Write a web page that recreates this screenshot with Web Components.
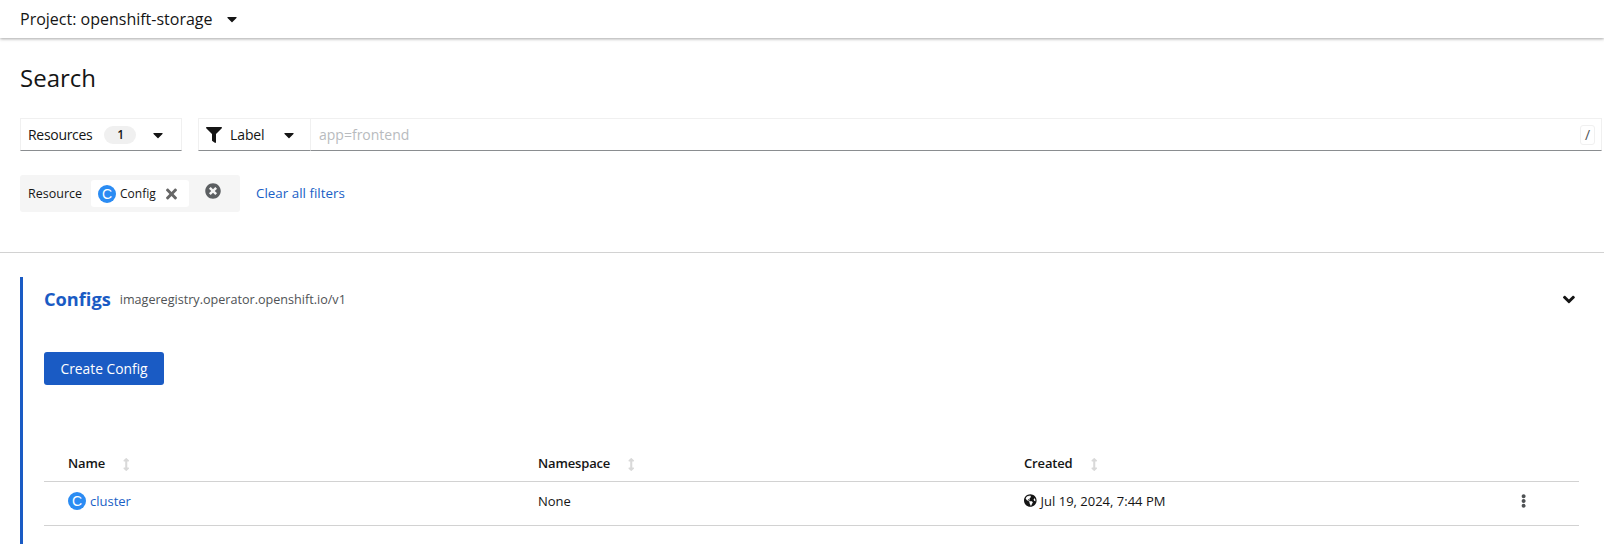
<!DOCTYPE html>
<html>
<head>
<meta charset="utf-8">
<title>Search</title>
<style>
html, body { margin: 0; background: #fff; }
body { font: 14px/21px "Open Sans", sans-serif; color: #151515; }
</style>
</head>
<body>
<project-bar>Project: openshift-storage</project-bar>
<search-page>
    <search-toolbar></search-toolbar>
    <filter-chips></filter-chips>
</search-page>
<resource-section name="Configs" api="imageregistry.operator.openshift.io/v1" action="Create Config">
    <resource-table></resource-table>
</resource-section>

<script>
// fontawesome outlines, [viewBox width, path]
const ICONS = {
    caret: [320, "M31.3 192h257.3c17.8 0 26.7 21.5 14.1 34.1L174.1 354.8c-7.8 7.8-20.5 7.8-28.3 0L17.2 226.1C4.6 213.5 13.5 192 31.3 192z"],
    filter: [512, "M487.976 0H24.028C2.71 0-8.047 25.866 7.058 40.971L192 225.941V432c0 7.831 3.821 15.17 10.237 19.662l80 55.98C298.02 518.69 320 507.493 320 487.98V225.941l184.947-184.97C520.021 25.896 509.338 0 487.976 0z"],
    times: [352, "M242.72 256l100.07-100.07c12.28-12.28 12.28-32.19 0-44.48l-22.24-22.24c-12.28-12.28-32.19-12.28-44.48 0L176 189.28 75.93 89.21c-12.28-12.28-32.19-12.28-44.48 0L9.21 111.45c-12.28 12.28-12.28 32.19 0 44.48L109.28 256 9.21 356.07c-12.28 12.28-12.28 32.19 0 44.48l22.24 22.24c12.28 12.28 32.2 12.28 44.48 0L176 322.72l100.07 100.07c12.28 12.28 32.2 12.28 44.48 0l22.24-22.24c12.28-12.28 12.28-32.19 0-44.48L242.72 256z"],
    timesCircle: [512, "M256 8C119 8 8 119 8 256s111 248 248 248 248-111 248-248S393 8 256 8zm121.6 313.1c4.7 4.7 4.7 12.3 0 17L338 377.6c-4.7 4.7-12.3 4.7-17 0L256 312l-65.1 65.6c-4.7 4.7-12.3 4.7-17 0L134.4 338c-4.7-4.7-4.7-12.3 0-17l65.6-65-65.6-65.1c-4.7-4.7-4.7-12.3 0-17l39.6-39.6c4.7-4.7 12.3-4.7 17 0l65 65.7 65.1-65.6c4.7-4.7 12.3-4.7 17 0l39.6 39.6c4.7 4.7 4.7 12.3 0 17L312 256l65.6 65.1z"],
    globe: [496, "M248 8C111.03 8 0 119.03 0 256s111.03 248 248 248 248-111.03 248-248S384.97 8 248 8zm82.29 357.6c-3.9 3.88-7.99 7.95-11.31 11.28-2.99 3-5.1 6.7-6.17 10.71-1.51 5.66-2.73 11.38-4.77 16.87l-17.39 46.85c-13.76 3-28 4.69-42.65 4.69v-27.38c1.69-12.62-7.64-36.26-22.63-51.25-6-6-9.37-14.14-9.37-22.63v-32.01c0-11.64-6.27-22.34-16.46-27.97-14.37-7.95-34.81-19.06-48.81-26.11-11.48-5.78-22.1-13.14-31.65-21.75l-.8-.72a114.792 114.792 0 0 1-18.06-20.74c-9.38-13.77-24.66-36.42-34.59-51.14 20.47-45.5 57.36-82.04 103.2-101.89l24.01 12.01C203.48 89.74 216 82.01 216 70.11v-11.3c7.99-1.29 16.12-2.11 24.39-2.42l28.3 28.3c6.25 6.25 6.25 16.38 0 22.63L264 112l-10.34 10.34c-3.12 3.12-3.12 8.19 0 11.31l4.69 4.69c3.12 3.12 3.12 8.19 0 11.31l-8 8a8.008 8.008 0 0 1-5.66 2.34h-8.99c-2.08 0-4.08.81-5.58 2.27l-9.92 9.65a8.008 8.008 0 0 0-1.58 9.31l15.59 31.19c2.66 5.32-1.21 11.58-7.15 11.58h-5.64c-1.93 0-3.79-.7-5.24-1.96l-9.28-8.06a16.017 16.017 0 0 0-15.55-3.1l-31.17 10.39a11.95 11.95 0 0 0-8.17 11.34c0 4.53 2.56 8.66 6.61 10.69l11.08 5.54c9.41 4.71 19.79 7.16 30.31 7.16s22.59 27.29 32 32h66.75c8.49 0 16.62 3.37 22.63 9.37l13.69 13.69a30.503 30.503 0 0 1 8.93 21.57 46.536 46.536 0 0 1-13.72 32.98zM417 274.25c-5.79-1.45-10.84-5-14.15-9.97l-17.98-26.97a23.97 23.97 0 0 1 0-26.62l19.59-29.38c2.32-3.47 5.5-6.29 9.24-8.15l12.98-6.49C440.2 193.59 448 223.87 448 256c0 8.67-.74 17.16-1.82 25.54L417 274.25z"],
    kebab: [192, "M96 184c39.8 0 72 32.2 72 72s-32.2 72-72 72-72-32.2-72-72 32.2-72 72-72zM24 80c0 39.8 32.2 72 72 72s72-32.2 72-72S135.8 8 96 8 24 40.2 24 80zm0 352c0 39.8 32.2 72 72 72s72-32.2 72-72-32.2-72-72-72-72 32.2-72 72z"],
    angle: [320, "M143 352.3L7 216.3c-9.4-9.4-9.4-24.6 0-33.9l22.6-22.6c9.4-9.4 24.6-9.4 33.9 0l96.4 96.4 96.4-96.4c9.4-9.4 24.6-9.4 33.9 0l22.6 22.6c9.4 9.4 9.4 24.6 0 33.9l-136 136c-9.2 9.4-24.4 9.4-33.8 0z"],
    sort: [256, "M214.059 377.941H168V134.059h46.059c21.382 0 32.09-25.851 16.971-40.971L144.971 7.029c-9.373-9.373-24.568-9.373-33.941 0L24.971 93.088c-15.119 15.119-4.411 40.971 16.971 40.971H88v243.882H41.941c-21.382 0-32.09 25.851-16.971 40.971l86.059 86.059c9.373 9.373 24.568 9.373 33.941 0l86.059-86.059c15.12-15.119 4.412-40.971-16.97-40.971z"]
}
const icon = (name, h, color) =>
    `<svg viewBox="0 0 ${ICONS[name][0]} 512" height="${h}" width="${h * ICONS[name][0] / 512}" fill="${color}" style="display:block;flex:none"><path d="${ICONS[name][1]}"/></svg>`

const define = (tag, html) => customElements.define(tag, class extends HTMLElement {
    constructor() {
        super().attachShadow({ mode: "open" }).innerHTML = typeof html == "function" ? html(this) : html
    }
    connectedCallback() {
        if (typeof html == "function") this.shadowRoot.innerHTML = html(this)
    }
})

define("res-badge", `<style>
    :host { display: inline-flex; align-items: center; justify-content: center; flex: none;
        width: 18px; height: 18px; border-radius: 50%; background: #2b8cf3; color: #fff;
        font: 14px/18px "Liberation Sans", sans-serif; }
</style>C`)

define("project-bar", `<style>
    :host { display: flex; align-items: center; height: 38px; padding-left: 20px; position: relative;
        box-shadow: 0 1px 3px rgba(3,3,3,.35); font-size: 16px; }
    span { margin-left: 14px; }
</style><slot></slot><span>${icon("caret", 16, "#151515")}</span>`)

define("search-page", `<style>
    :host { display: block; padding: 25px 2px 40px 20px; border-bottom: 1px solid #d2d2d2; }
    h1 { margin: 0 0 26px; font: 400 24px/29px "Open Sans", sans-serif; color: #151515; }
</style><h1>Search</h1><slot></slot>`)

define("search-toolbar", `<style>
    :host { display: flex; height: 33px; gap: 16px; margin-bottom: 24px; }
    .box { display: flex; align-items: center; box-sizing: border-box; height: 33px;
        border: 1px solid #f0f0f0; border-bottom-color: #8a8d90; }
    .res { width: 162px; padding-left: 7px; letter-spacing: -.3px; }
    .pill { width: 32px; height: 18px; margin-left: 12px; border-radius: 9px; background: #f0f0f0;
        font-size: 12px; line-height: 18px; text-align: center; font-weight: 600; }
    .res svg { margin-left: 17px; }
    .label { width: 112px; padding-left: 7px; border-right: 0; }
    .label b { font-weight: 400; margin-left: 8px; letter-spacing: -.1px; }
    .label svg:last-child { margin-left: 19px; }
    .input { flex: 1; padding: 0 6px 0 8px; color: #b8bbbe; justify-content: space-between; }
    kbd { box-sizing: border-box; width: 15px; height: 20px; border: 1px solid #f0f0f0; border-radius: 3px;
        font: 14px/18px "Open Sans", sans-serif; color: #4f5255; text-align: center; }
</style>
<div class="box res">Resources<span class="pill">1</span>${icon("caret", 16, "#151515")}</div>
<div style="display:flex;flex:1">
    <div class="box label">${icon("filter", 16, "#151515")}<b>Label</b>${icon("caret", 16, "#151515")}</div>
    <div class="box input">app=frontend<kbd>/</kbd></div>
</div>`)

define("filter-chips", `<style>
    :host { display: flex; align-items: center; }
    .group { display: flex; align-items: center; width: 220px; height: 37px; box-sizing: border-box;
        padding-left: 8px; background: #f5f5f5; border-radius: 3px; font-size: 12.5px; }
    .chip { display: flex; align-items: center; gap: 4px; height: 27px; margin-left: 9px; width: 98px;
        box-sizing: border-box; padding-left: 7px; background: #fff; border-radius: 3px; font-size: 12px; }
    .chip svg { margin-left: 6px; }
    .close { margin: -6px 0 0 16px; }
    a { margin-left: 16px; color: #1a5fc6; font-size: 13.4px; }
</style>
<div class="group">Resource
    <div class="chip"><res-badge></res-badge>Config${icon("times", 16, "#666")}</div>
    <div class="close">${icon("timesCircle", 16, "#5c5f62")}</div>
</div>
<a>Clear all filters</a>`)

define("resource-section", host => `<style>
    :host { display: block; margin: 24px 25px 0 20px; padding: 0 0 18px 21px; border-left: 3px solid #1a5bc4; }
    .head { display: flex; align-items: center; height: 44px; }
    h2 { margin: 0; font: 700 18.2px/22px "Open Sans", sans-serif; color: #1a5bc4; }
    small { margin-left: 9px; font-size: 12.6px; color: #4f5255; }
    .head svg { margin-left: auto; margin-right: 4px; }
    button { display: block; width: 120px; height: 33px; margin: 31px 0 0; padding: 0; border: 0; border-radius: 3px;
        background: #1a5bc4; color: #fff; font: 13.8px "Open Sans", sans-serif; }
</style>
<div class="head"><h2>${host.getAttribute("name")}</h2><small>${host.getAttribute("api")}</small>${icon("angle", 19, "#151515")}</div>
<button>${host.getAttribute("action")}</button>
<slot></slot>`)

define("resource-table", `<style>
    :host { display: block; margin-top: 61px; }
    .row { display: grid; grid-template-columns: 470px 486px 1fr 90px; align-items: center; border-bottom: 1px solid #d2d2d2; }
    .row > div { display: flex; align-items: center; padding-left: 24px; }
    .th { height: 35px; font-weight: 600; font-size: 13px; letter-spacing: -.15px; }
    .th svg { margin-left: 18px; margin-top: 1px; }
    .td { font-size: 13px; padding-bottom: 5px; height: 38px; }
    a { color: #1a5fc6; margin-left: 4px; }
    .date svg { margin-right: 4px; margin-top: -2px; }
    .more { padding-left: 32px !important; }
</style>
<div class="row th">
    <div>Name${icon("sort", 13, "#d9d9d9")}</div>
    <div>Namespace${icon("sort", 13, "#d9d9d9")}</div>
    <div>Created${icon("sort", 13, "#d9d9d9")}</div>
    <div></div>
</div>
<div class="row td">
    <div><res-badge></res-badge><a>cluster</a></div>
    <div>None</div>
    <div class="date">${icon("globe", 13, "#151515")}Jul 19, 2024, 7:44 PM</div>
    <div class="more">${icon("kebab", 14, "#4f5255")}</div>
</div>`)
</script>
</body>
</html>
